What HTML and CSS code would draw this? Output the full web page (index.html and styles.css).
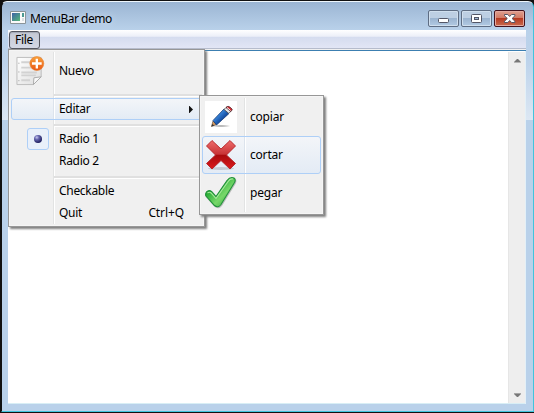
FILE: index.html
```html
<!DOCTYPE html>
<html lang="es">
<head>
<meta charset="utf-8">
<title>MenuBar demo</title>
<link rel="stylesheet" href="styles.css">
</head>
<body>
<div class="window">
  <header class="titlebar">
    <svg class="appicon" width="16" height="14" viewBox="0 0 16 14"><defs><linearGradient id="app" x2="1" y2="1"><stop stop-color="#3f63a8"/><stop offset="1" stop-color="#55b978"/></linearGradient></defs><path fill="#fafafa" stroke="#8b9498" d="M.5.5h15v12H.5z"/><path fill="url(#app)" d="M2 2h8v8H2z"/><path fill="#4b9a92" d="M12 2h2v4h-2z"/><path fill="#d9dfe2" d="M12 7h2v3h-2z"/></svg>
    <span class="title">MenuBar demo</span>
    <div class="controls">
      <span class="ctl"><svg width="29" height="15" viewBox="0 0 29 15"><rect x="9.5" y="7.5" width="10" height="4" rx="1" fill="#fff" stroke="#535666"/></svg></span>
      <span class="ctl"><svg width="29" height="15" viewBox="0 0 29 15"><rect x="9.5" y="3.5" width="10" height="8" rx="1" fill="#fff" stroke="#535666"/><rect x="12.5" y="6.5" width="4" height="2" fill="#9fb8d4" stroke="#535666"/></svg></span>
      <span class="ctl close"><svg width="29" height="15" viewBox="0 0 29 15"><path d="M9.5 3.5h3.3l1.9 2 1.9-2h3.3v1.300l-2.800 2.700 2.800 2.700v1.300h-3.300l-1.900-2-1.900 2H9.500v-1.300l2.800-2.700-2.800-2.700z" fill="#fff" stroke="#535666"/></svg></span>
    </div>
  </header>
  <nav class="menubar"><span class="file">File</span></nav>
  <main class="area">
    <div class="scroll">
      <svg width="7" height="4" viewBox="0 0 7 4"><path fill="#777" d="M3 0h1l3 3H0z"/><path fill="#b5b5b5" d="M0 3h7v1H0z"/></svg>
      <svg width="7" height="4" viewBox="0 0 7 4"><path fill="#777" d="M0 1h7L4 4H3z"/><path fill="#a5a5a5" d="M0 0h7v1H0z"/></svg>
    </div>
  </main>
</div>

<div class="menu main">
  <div class="item tall"><span class="icon">
    <svg width="32" height="32" viewBox="0 0 32 33"><defs><linearGradient id="paper" x2="1" y2="1"><stop stop-color="#fff"/><stop offset="1" stop-color="#dedede"/></linearGradient><linearGradient id="orange" x2="0" y2="1"><stop stop-color="#f8a13b"/><stop offset="1" stop-color="#ea5716"/></linearGradient></defs>
    <path d="M1.500 2.500h25v20l-8 8h-17z" fill="url(#paper)" stroke="#bcbcbc"/><path d="M26.500 22.500l-8 8 .5-7z" fill="#f8f8f8" stroke="#aaa"/><path d="M6 7.500h10M6 13h11M6 18h16M6 21h15M6 26h9" stroke="#d2d2d2" stroke-width="2"/><path d="M3 8.500h1M3 17.500h1M3 26.500h1" stroke="#999"/><circle cx="22" cy="8.800" r="7.200" fill="url(#orange)" stroke="#e7802e" stroke-width=".6"/><path d="M22 3.800v10M17 8.800h10" stroke="#fff" stroke-width="2.400"/></svg>
  </span><span class="label">Nuevo</span></div>
  <div class="sep"></div>
  <div class="item hot"><span class="icon"></span><span class="label">Editar</span><svg class="arrow" width="4" height="7" viewBox="0 0 4 7"><path d="M0 0h.5L4 3.500.5 7H0z" fill="#111"/></svg></div>
  <div class="sep"></div>
  <div class="item"><span class="icon"><span class="radio"><svg width="8" height="8" viewBox="0 0 8 8"><defs><radialGradient id="dot" cx=".35" cy=".3" r=".7"><stop stop-color="#c6c6ef"/><stop offset=".4" stop-color="#6464ad"/><stop offset="1" stop-color="#20205f"/></radialGradient></defs><circle cx="4" cy="4" r="4" fill="url(#dot)"/></svg></span></span><span class="label">Radio 1</span></div>
  <div class="item"><span class="icon"></span><span class="label">Radio 2</span></div>
  <div class="sep"></div>
  <div class="item"><span class="icon"></span><span class="label">Checkable</span></div>
  <div class="item"><span class="icon"></span><span class="label">Quit</span><span class="key">Ctrl+Q</span></div>
</div>

<div class="menu sub">
  <div class="item tall"><span class="icon"><svg width="32" height="32" viewBox="0 0 32 32"><defs><linearGradient id="pen" gradientUnits="userSpaceOnUse" x1="13" y1="13" x2="18" y2="18"><stop stop-color="#3d8de2"/><stop offset="1" stop-color="#124a9e"/></linearGradient><radialGradient id="shade"><stop stop-color="#999"/><stop offset="1" stop-color="#fff"/></radialGradient></defs><path fill="#fff" d="M0 0h32v32H0z"/><ellipse cx="16" cy="25" rx="10" ry="1.500" fill="url(#shade)"/><path d="M6.500 25.500L8 20l3.500 3.500z" fill="#d69a5c" stroke="#675346" stroke-width=".7"/><path d="M6.500 25.500l.7-2.500 2 1.500z" fill="#333"/><path d="M8 19.500L19 8l5 4.500L11.500 24z" fill="url(#pen)" stroke="#173b76" stroke-width=".8"/><path d="M19 8.500l2-2.100 4.800 4-2 2z" fill="#e7e9ed" stroke="#444" stroke-width=".8"/><path d="M21 6.300q2-2 4.500.200t1.500 2.800L25.500 10.500z" fill="#d72c32" stroke="#49282e" stroke-width=".8"/><path d="M22 6.500l3.500 3" stroke="#fff"/></svg></span><span class="label">copiar</span></div>
  <div class="item tall hot"><span class="icon"><svg width="32" height="32" viewBox="0 0 32 32"><defs><linearGradient id="red" x2="0" y2="1"><stop stop-color="#ee6c6c"/><stop offset=".48" stop-color="#c83336"/><stop offset=".52" stop-color="#a90a0d"/><stop offset="1" stop-color="#dc1b1d"/></linearGradient></defs><ellipse cx="16" cy="29.500" rx="13" ry="1.500" fill="#aeb4bc" opacity=".6"/><path d="M7 1.500l9 8.500 9-8.500 5.500 5.500-9 9 9 8.500-5.500 5.500-9-8.500L7 30l-5.500-5.500 9-8.500-9-9z" fill="url(#red)" stroke="#b32327" stroke-width=".9" stroke-linejoin="round"/></svg></span><span class="label">cortar</span></div>
  <div class="item tall"><span class="icon"><svg width="32" height="32" viewBox="0 0 32 32"><defs><linearGradient id="green" x2="1" y2="1"><stop stop-color="#55cb58"/><stop offset=".3" stop-color="#27ac35"/><stop offset=".6" stop-color="#78d86a"/><stop offset="1" stop-color="#259b31"/></linearGradient></defs><path d="M1.500 15q2.500-2.500 5-.5l4.500 5L22 3.500q3-4 7-2.500 2 1.500.5 4.500L16 27.500q-3 4-6.500 1L1 19q-1-2 .5-4z" transform="translate(.5 .8)" fill="none" stroke="#bbb" stroke-width="1.500"/><path d="M1.500 15q2.500-2.500 5-.5l4.500 5L22 3.500q3-4 7-2.500 2 1.500.5 4.500L16 27.500q-3 4-6.500 1L1 19q-1-2 .5-4z" fill="url(#green)" stroke="#20913a" stroke-width="1.100"/><path d="M2.500 16q2-1.500 3.500 0l5 5.500L23.500 4q1.500-2.500 4.500-2" fill="none" stroke="#a8e99d" stroke-width="1.100"/></svg></span><span class="label">pegar</span></div>
</div>
</body>
</html>
```

FILE: styles.css
```css
* { box-sizing: border-box; }
html, body { margin: 0; width: 534px; height: 413px; overflow: hidden; background: #111; }
body { position: relative; font: 12px/16px "Noto Sans", "Open Sans", sans-serif; letter-spacing: -.3px; color: #000; }
svg { display: block; flex: none; }
.window {
  height: 411px; margin: 1px 0 0 1px; padding: 0 7px 7px 6px;
  display: flex; flex-direction: column;
  border: 1px solid #40c4dc; border-top-color: #eef6fc; border-left-color: #111;
  border-radius: 6px 6px 0 0;
  background: linear-gradient(#9bb5d3, #b9d1ea 28px, #bdd3eb 60px, #dce7f3 118px, #b9d1ea 118px);
}
.titlebar { height: 28px; display: flex; align-items: flex-start; padding-left: 2px; flex: none; }
.appicon { margin-top: 9px; }
.title { margin: 9px 0 0 4px; letter-spacing: -.5px; text-shadow: 0 0 6px #dce9f7; }
.controls { margin: 8px 0 0 auto; padding-right: 1px; display: flex; gap: 2px; }
.ctl { height: 17px; border: 1px solid #5e6d83; border-radius: 2px; box-shadow: inset 0 0 0 1px #d0dfee; background: linear-gradient(#bdcfe3 50%, #9bb4d0 50%, #b2cae3); }
.ctl.close { border-color: #43131e; box-shadow: inset 0 0 0 1px #e4a89e; background: linear-gradient(#dfa090, #d17863 48%, #b73a22 50%, #c96b4e); }
.menubar { height: 19px; flex: none; padding: 1px; border-bottom: 1px solid #b6bccc; background: linear-gradient(#fff, #eceff8 35%, #d5dcef 40%, #e2e6f5); }
.file { display: block; width: 31px; height: 18px; padding-left: 5px; line-height: 16px; border: 1px solid #54565f; border-radius: 3px; background: linear-gradient(#c4c8d3, #d4d8e5); box-shadow: inset 0 1px 1px #a5a9b5; }
.area { flex: 1; display: flex; justify-content: flex-end; background: #fff; border-top: 1px solid #f0f0f0; box-shadow: inset 0 1px #3c7fb1, inset -1px 0 #e3f0f7, inset 0 -1px #d8eef5; padding: 2px 1px 1px 0; }
.scroll { width: 17px; background: #eee; border-left: 1px solid #e6e6e6; display: flex; flex-direction: column; align-items: center; justify-content: space-between; padding: 7px 0 6px; }
.menu { position: absolute; padding: 2px; border: 1px solid #979797; background: #f0f0f0; }
.menu { box-shadow: inset 0 0 0 1px #f5f5f5, 2px 2px 2px #808080; }
.main { left: 8px; top: 49px; width: 197px; height: 178px; }
.sub { left: 199px; top: 95px; width: 125px; height: 120px; }
.item { height: 22px; display: flex; align-items: center; border: 1px solid transparent; border-radius: 3px; }
.tall { height: 38px; }
.icon { width: 42px; align-self: stretch; flex: none; display: flex; align-items: center; padding-left: 3px; margin: -1px 0; border-right: 1px solid #e2e3e3; box-shadow: 1px 0 #fff; }
.sub .icon { padding-left: 2px; }
.label { margin: 0 0 0 5px; }
.sub .label { letter-spacing: -.2px; }
.hot { border-color: #aecff7; background: linear-gradient(rgba(244,247,252,.7), rgba(222,233,247,.7)); }
.hot .icon { margin: 0; border-color: #dce3ec; }
.arrow { margin: 0 8px 0 auto; }
.key { margin: 0 17px 0 auto; letter-spacing: -.1px; }
.sep { height: 8px; padding: 4px 0 0 42px; margin-left: 1px; background: linear-gradient(90deg, transparent 41px, #e2e3e3 41px, #e2e3e3 42px, #fff 42px, #fff 43px, transparent 43px); }
.sep::before { content: ""; display: block; height: 2px; background: #e0e0e0; border-bottom: 1px solid #fff; }
.radio { width: 22px; height: 22px; margin-left: 12px; display: flex; align-items: center; justify-content: center; border: 1px solid #aecff7; border-radius: 3px; background: #e9f0fa; }
```
